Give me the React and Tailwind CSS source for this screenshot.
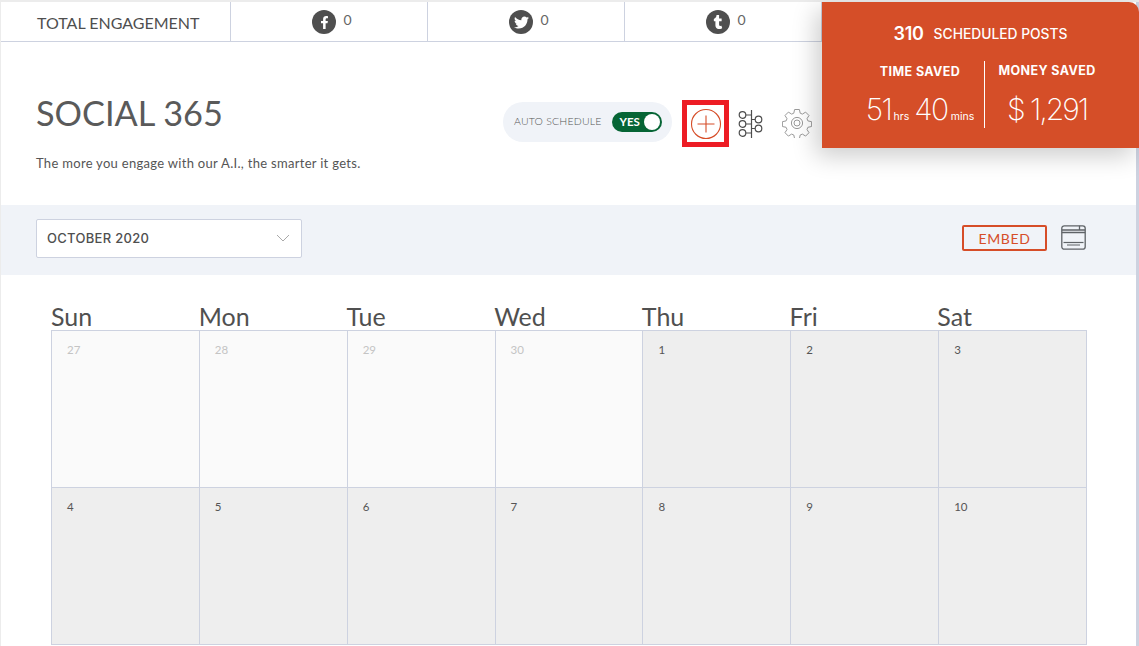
import { FaFacebookF, FaTwitter, FaTumblr } from 'react-icons/fa';

const lato = { fontFamily: 'Lato, sans-serif' };

const socials = [
  { name: 'facebook', Icon: FaFacebookF, size: 13 },
  { name: 'twitter', Icon: FaTwitter, size: 15 },
  { name: 'tumblr', Icon: FaTumblr, size: 14 },
];

const days = ['Sun', 'Mon', 'Tue', 'Wed', 'Thu', 'Fri', 'Sat'];

const weeks = [
  [
    { n: 27, muted: true },
    { n: 28, muted: true },
    { n: 29, muted: true },
    { n: 30, muted: true },
    { n: 1 },
    { n: 2 },
    { n: 3 },
  ],
  [{ n: 4 }, { n: 5 }, { n: 6 }, { n: 7 }, { n: 8 }, { n: 9 }, { n: 10 }],
];

function NodesIcon() {
  return (
    <svg width="26" height="30" viewBox="0 0 26 30" fill="none" stroke="#4d4d4d" strokeWidth="1.2">
      <path d="M13.5 1v28" />
      <circle cx="4.5" cy="6" r="3.3" />
      <circle cx="4.5" cy="15" r="3.3" />
      <circle cx="4.5" cy="24" r="3.3" />
      <circle cx="20.5" cy="10.5" r="3.3" />
      <circle cx="20.5" cy="19.5" r="3.3" />
      <path d="M8 6h5.5M8 15h5.5M8 24h5.5M13.5 10.5h3.5M13.5 19.5h3.5" />
    </svg>
  );
}

function GearIcon() {
  return (
    <svg width="30" height="30" viewBox="0 0 30 30" fill="none" stroke="#9a9a9a" strokeWidth="1">
      <path d="M12.6 1.5h4.8l.8 3.7 2.2.9 3.2-2 3.4 3.4-2 3.2.9 2.2 3.7.8v4.8l-3.7.8-.9 2.2 2 3.2-3.4 3.4-3.2-2-2.2.9-.8 3.7h-4.8l-.8-3.7-2.2-.9-3.2 2-3.4-3.4 2-3.2-.9-2.2-3.7-.8v-4.8l3.7-.8.9-2.2-2-3.2 3.4-3.4 3.2 2 2.2-.9z" />
      <circle cx="15" cy="15" r="5.6" />
      <circle cx="15" cy="15" r="3" />
    </svg>
  );
}

function EmbedIcon() {
  return (
    <svg width="25" height="25" viewBox="0 0 25 25" fill="none" stroke="#5f6367" strokeWidth="1.3">
      <rect x="0.8" y="0.8" width="23.4" height="23.4" rx="2.5" />
      <path d="M0.8 5h23.4M0.8 7.5h23.4M18.5 0.8V5" />
      <path d="M2.5 17.5h20" strokeWidth="1.2" />
      <path d="M6 20h13" strokeWidth="1" />
    </svg>
  );
}

export default function App() {
  return (
    <div className="relative flex h-[646px] w-[1139px] overflow-hidden bg-[#ececec] pl-px pt-[2px] text-[#4f4f4f]" style={lato}>
      <div className="h-full w-[1135px] bg-white">
        <div className="flex h-10 border-b border-[#cdd2e0]">
          <div className="flex w-[230px] items-center border-r border-[#cdd2e0] pl-[36px] pt-[3px] text-[16px]">
            TOTAL ENGAGEMENT
          </div>
          {socials.map(({ name, Icon, size }) => (
            <div key={name} className="flex w-[197px] justify-center gap-[7px] border-r border-[#cdd2e0] pl-[6px] pt-2">
              <span className="flex h-6 w-6 items-center justify-center rounded-full bg-[#4f4f4f] text-white">
                <Icon size={size} />
              </span>
              <span className="text-sm leading-[19px] text-[#666]">0</span>
            </div>
          ))}
        </div>

        <div className="flex h-[163px] items-start justify-between pl-[35px]">
          <div>
            <h1 className="mt-[50px] text-[34.3px] leading-[42px] text-[#5a5a5a]">SOCIAL 365</h1>
            <p className="mt-[21px] text-[13px] leading-4 tracking-[0.3px] text-[#555]">
              The more you engage with our A.I., the smarter it gets.
            </p>
          </div>
          <div className="mr-[324px] mt-[58px] flex items-center">
            <div className="mb-[4px] flex h-10 w-[169px] items-center rounded-[20px] bg-[#f0f3f8] pl-[11px]">
              <span className="text-[10.5px] font-light tracking-[0.2px] text-[#555]">AUTO SCHEDULE</span>
              <span className="ml-[10px] flex h-5 w-[50px] items-center justify-between rounded-[10px] bg-[#066535] pl-2 pr-[2px]">
                <span className="text-[11.5px] font-bold text-white">YES</span>
                <span className="h-4 w-4 rounded-full bg-white" />
              </span>
            </div>
            <div className="ml-[10px] flex h-[47px] w-[47px] items-center justify-center border-[5px] border-[#ed1c24]">
              <svg width="32" height="32" viewBox="0 0 32 32" fill="none" stroke="#d64d28" strokeWidth="1.1">
                <circle cx="16" cy="16" r="14.5" />
                <path d="M16 7.5v17M7.5 16h17" />
              </svg>
            </div>
            <div className="ml-[9px] flex">
              <NodesIcon />
            </div>
            <div className="mb-[2px] ml-[18px] flex">
              <GearIcon />
            </div>
          </div>
        </div>

        <div className="flex h-[70px] items-center justify-between bg-[#f0f3f8] pb-1 pl-[35px] pr-[50px]">
          <div className="flex h-[39px] w-[266px] items-center justify-between rounded-[2px] border border-[#cdd2e0] bg-white pl-[10px] pr-[11px]">
            <span className="pt-[2px] text-[13px] font-medium tracking-[0.3px] text-[#4f4f4f]" style={{ fontFamily: 'Inter, sans-serif' }}>
              OCTOBER 2020
            </span>
            <svg width="14" height="8" viewBox="0 0 14 8" fill="none" stroke="#a9a9a9" strokeWidth="1">
              <path d="M1 1l6 6 6-6" />
            </svg>
          </div>
          <div className="flex items-center gap-[14px]">
            <span className="flex h-[26px] w-[85px] items-center justify-center rounded-[2px] border-2 border-[#d64d28] text-[14px] tracking-[0.6px] text-[#d64d28]">
              EMBED
            </span>
            <div className="mb-[2px] flex">
              <EmbedIcon />
            </div>
          </div>
        </div>

        <div className="pl-[50px]">
          <div className="mt-[27px] grid w-[1034px] grid-cols-7">
            {days.map((d) => (
              <div key={d} className="text-[25px] leading-[28px] text-[#505050]">
                {d}
              </div>
            ))}
          </div>
          <div className="grid w-[1036px] grid-cols-7 border-l border-t border-[#cdd2e0]">
            {weeks.flat().map((c) => (
              <div
                key={c.n}
                className={
                  c.muted
                    ? 'h-[157px] border-b border-r border-[#cdd2e0] bg-[#fafafa] pl-[15px] pt-[11px] text-[11.5px] leading-[16px] text-[#c4c4c4]'
                    : 'h-[157px] border-b border-r border-[#cdd2e0] bg-[#eeeeee] pl-[15px] pt-[11px] text-[11.5px] leading-[16px] text-[#555]'
                }
              >
                {c.n}
              </div>
            ))}
          </div>
        </div>
      </div>
      <div className="h-full w-[3px] bg-[#cdd2e0]" />

      <div className="absolute right-0 top-[2px] h-[146px] w-[317px] rounded-tr-[10px] bg-[#d54e28] text-white shadow-[-6px_8px_24px_rgba(0,0,0,0.2)]" style={{ fontFamily: 'Inter, sans-serif' }}>
        <div className="flex items-center justify-center gap-[10px] pt-[20px]">
          <span className="text-[18px] font-semibold leading-6 tracking-[-0.3px]">310</span>
          <span className="text-[13.8px] font-medium leading-6">SCHEDULED POSTS</span>
        </div>
        <div className="mt-[15px] flex">
          <div className="h-[67px] w-[163px] border-r border-white pl-[34px] text-center">
            <div className="pt-[3px] text-[12.5px] font-bold leading-4 tracking-[0.4px]">TIME SAVED</div>
            <div className="mt-[13px] flex items-baseline justify-center font-extralight leading-8">
              <span className="text-[30px] tracking-[-1.5px]">51</span>
              <span className="ml-[2px] text-[10.5px] font-normal">hrs</span>
              <span className="ml-[5px] text-[30px] tracking-[-1.5px]">40</span>
              <span className="ml-[3px] text-[10.5px] font-normal">mins</span>
            </div>
          </div>
          <div className="w-[153px] pr-[29px] text-center">
            <div className="pt-[2px] text-[12.5px] font-bold leading-4 tracking-[0.4px]">MONEY SAVED</div>
            <div className="mt-[14px] text-[30px] font-extralight leading-8 tracking-[-2px]">$ 1,291</div>
          </div>
        </div>
      </div>
    </div>
  );
}
